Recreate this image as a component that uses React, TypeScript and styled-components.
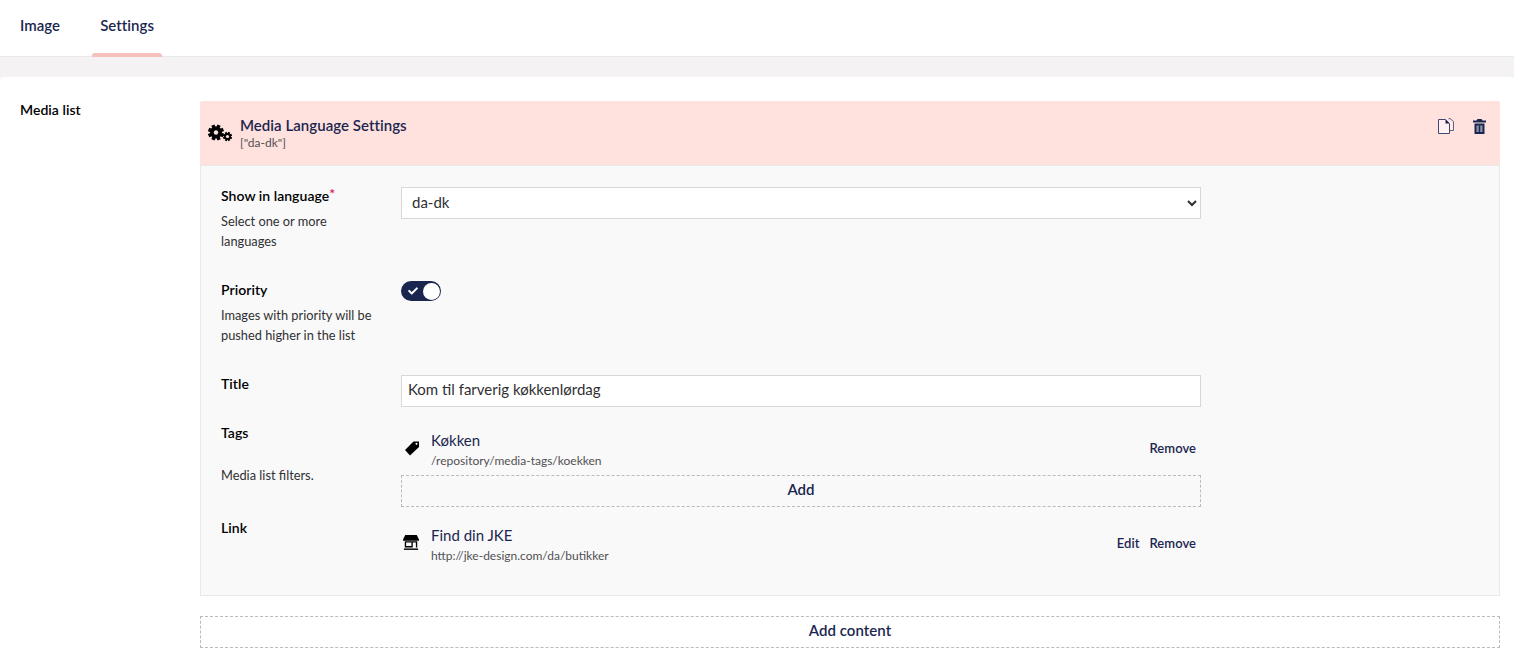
import React from "react";
import styled, { createGlobalStyle } from "styled-components";
import { FaCheck } from "react-icons/fa";

const GlobalStyle = createGlobalStyle`
  html, body { margin: 0; padding: 0; background: #f4f2f3; }
  body { font-family: Lato, "Open Sans", sans-serif; color: #1b264f; overflow: hidden; }
  * { box-sizing: border-box; }
`;

const Page = styled.div`
  width: 1514px;
  height: 653px;
  overflow: hidden;
  display: flex;
  flex-direction: column;
`;

const TabBar = styled.div`
  height: 57px;
  flex: none;
  background: #fff;
  border-bottom: 1px solid #e9e9eb;
  display: flex;
  gap: 24px;
  padding-left: 12px;
`;

const Tab = styled.div<{ $active?: boolean }>`
  position: relative;
  height: 56px;
  padding: 0 8px;
  font-size: 15px;
  font-weight: 600;
  letter-spacing: 0.04px;
  line-height: 51px;
  color: #1b264f;

  ${(p) =>
    p.$active &&
    `&::after {
      content: "";
      position: absolute;
      left: 0;
      right: 0;
      bottom: -1px;
      height: 4px;
      background: #f5c1bc;
      border-radius: 3px 3px 0 0;
    }`}
`;

const Panel = styled.div`
  margin-top: 20px;
  flex: 1;
  background: #fff;
  border-radius: 3px 3px 0 0;
  padding: 24px 14px 0 20px;
  display: flex;
`;

const PropertyLabel = styled.div`
  width: 180px;
  flex: none;
  font-size: 14px;
  font-weight: 600;
  letter-spacing: 0.04px;
  line-height: 18px;
  color: #000;
`;

const Editor = styled.div`
  width: 1300px;
  flex: none;
`;

const Block = styled.div`
  height: 495px;
  border-radius: 3px 3px 0 0;
  background: #f9f9f9;
  border: 1px solid #e9e9eb;
  border-top: none;
`;

const BlockHeader = styled.div`
  height: 65px;
  margin: 0 -1px;
  background: #ffe1dd;
  border-bottom: 1px solid #e9e9eb;
  border-radius: 3px 3px 0 0;
  display: flex;
  align-items: center;
  padding: 0 14px 0 8px;
`;

const BlockIcon = styled.span`
  width: 24px;
  height: 20px;
  margin-right: 8px;
  margin-top: 1px;
  display: flex;
  color: #000;
`;

const BlockTitle = styled.div`
  flex: 1;
  margin-top: 1px;
`;

const BlockName = styled.div`
  font-size: 15px;
  font-weight: 600;
  letter-spacing: 0.04px;
  line-height: 18px;
  margin-bottom: 1px;
  color: #1b264f;
`;

const BlockMeta = styled.div`
  font-size: 12px;
  line-height: 16px;
  color: #515054;
`;

const HeaderActions = styled.div`
  display: flex;
  gap: 19px;
  align-items: center;
  margin-top: -14px;
`;

const BlockBody = styled.div`
  padding: 21px 20px 0;
`;

const Row = styled.div<{ $height: number }>`
  display: flex;
  height: ${(p) => p.$height}px;
`;

const Meta = styled.div`
  width: 180px;
  flex: none;
`;

const FieldLabel = styled.div`
  font-size: 14px;
  font-weight: 600;
  letter-spacing: 0.04px;
  line-height: 18px;
  color: #000;

  sup {
    color: #d42054;
    font-size: 14px;
    line-height: 0;
    vertical-align: 2px;
  }
`;

const FieldHelp = styled.div<{ $top?: number }>`
  margin-top: ${(p) => p.$top ?? 6}px;
  font-size: 12.8px;
  line-height: 20px;
  color: #303033;
  width: 160px;
`;

const Control = styled.div`
  width: 800px;
  flex: none;
`;

const Select = styled.select`
  display: block;
  width: 800px;
  height: 32px;
  padding: 0 6px 2px;
  border: 1px solid #d8d7d9;
  background: #fff;
  font-family: inherit;
  font-size: 15px;
  color: #303033;
  border-radius: 0;
  outline: none;
`;

const Toggle = styled.div`
  width: 40px;
  height: 20px;
  border-radius: 10px;
  background: #1b264f;
  display: flex;
  align-items: center;
  padding: 0 1px 0 7px;
  justify-content: space-between;
  color: #fff;
  font-size: 10px;
`;

const Knob = styled.span`
  width: 17px;
  height: 17px;
  border-radius: 50%;
  background: #fff;
`;

const TextInput = styled.input`
  display: block;
  width: 800px;
  height: 32px;
  padding: 0 6px 4px;
  border: 1px solid #d8d7d9;
  background: #fff;
  font-family: inherit;
  font-size: 15px;
  color: #303033;
  outline: none;
`;

const Picked = styled.div`
  height: 51px;
  padding-top: 2px;
  display: flex;
  align-items: center;
`;

const PickedIcon = styled.span`
  width: 30px;
  flex: none;
  display: flex;
  margin-bottom: 6px;
`;

const PickedText = styled.div`
  flex: 1;
`;

const PickedName = styled.div`
  font-size: 15px;
  line-height: 20px;
  margin: -1px 0 1px;
  color: #1b264f;
`;

const PickedPath = styled.div`
  font-size: 12px;
  line-height: 20px;
  color: #515054;
`;

const Action = styled.span`
  font-size: 13px;
  font-weight: 600;
  letter-spacing: 0.04px;
  line-height: 16px;
  color: #1b264f;
  margin: 0 5px 6px 10px;
  & + & { margin-left: 5px; }
`;

const AddButton = styled.div<{ $top: number }>`
  height: 32px;
  margin-top: ${(p) => p.$top}px;
  padding-bottom: 4px;
  border: 1px dashed #bbbabf;
  display: flex;
  align-items: center;
  justify-content: center;
  font-size: 15px;
  font-weight: 600;
  letter-spacing: 0.04px;
  color: #1b264f;
`;

// teeth around a gear, drawn as short rects turned round its centre
const Gear = ({ cx, cy, r, hole, teeth }: { cx: number; cy: number; r: number; hole: number; teeth: number }) => (
  <g fill="#000">
    {Array.from({ length: teeth }).map((_, i) => (
      <rect
        key={i}
        x={cx - r * 0.22}
        y={cy - r}
        width={r * 0.44}
        height={r * 2}
        transform={`rotate(${(i * 180) / teeth + 22} ${cx} ${cy})`}
      />
    ))}
    <circle cx={cx} cy={cy} r={r * 0.74} />
    <circle cx={cx} cy={cy} r={hole} fill="#ffe1dd" />
  </g>
);

const CogsIcon = () => (
  <svg width="24" height="20" viewBox="0 0 24 20">
    <Gear cx={8} cy={8.5} r={8} hole={2.2} teeth={4} />
    <Gear cx={19.5} cy={12.5} r={4.6} hole={1.6} teeth={4} />
  </svg>
);

const TagIcon = () => (
  <svg width="16" height="16" viewBox="0 0 16 16" style={{ marginLeft: 3 }}>
    <path
      fillRule="evenodd"
      d="M9.5 1.5 H15 V7 L6 15.5 L1 10 Z M12.5 2.8 a1 1 0 1 0 .01 0 Z"
      fill="#000"
    />
  </svg>
);

const StoreIcon = () => (
  <svg width="16" height="17" viewBox="0 0 18 17" style={{ marginLeft: 2 }}>
    <path d="M2.5 0 H15.5 L18 5 V6.5 H0 V5 Z" fill="#000" />
    <path fillRule="evenodd" d="M2 7 H16 V14 H2 Z M3.5 8.5 V12.5 H9.5 V8.5 Z M11 8.5 V14 H14.5 V8.5 Z" fill="#000" />
    <rect x="1" y="15.2" width="16" height="1.6" fill="#000" />
  </svg>
);

const CopyIcon = () => (
  <svg width="16" height="16" viewBox="0 0 16 16" fill="none">
    <path d="M10.5 .8 L12 .5 L15.5 3.5 V12.5 H12" stroke="#5b6284" fill="#fff" fillOpacity="0.3" />
    <path d="M.5 1.5 H7.5 L11.5 5.5 V15.5 H.5 Z" fill="#fff" fillOpacity="0.55" stroke="#3f4870" />
    <path d="M7.5 1.5 V5.5 H11.5 Z" fill="#1b264f" />
  </svg>
);

const TrashIcon = () => (
  <svg width="13" height="15" viewBox="0 0 13 15">
    <path d="M4.5 0 H8.5 L9.5 1.5 H13 V3.5 H0 V1.5 H3.5 Z" fill="#1b264f" />
    <path d="M1.5 4.5 H11.5 V15 H1.5 Z" fill="#1b264f" />
    <path d="M3.5 6.5 H9.5 V13 H3.5 Z" fill="#8d90a6" />
    <rect x="5.8" y="6.5" width="1.4" height="6.5" fill="#1b264f" />
  </svg>
);

export default function App() {
  return (
    <Page>
      <GlobalStyle />
      <TabBar>
        <Tab>Image</Tab>
        <Tab $active>Settings</Tab>
      </TabBar>
      <Panel>
        <PropertyLabel>Media list</PropertyLabel>
        <Editor>
          <Block>
            <BlockHeader>
              <BlockIcon>
                <CogsIcon />
              </BlockIcon>
              <BlockTitle>
                <BlockName>Media Language Settings</BlockName>
                <BlockMeta>["da-dk"]</BlockMeta>
              </BlockTitle>
              <HeaderActions>
                <CopyIcon />
                <TrashIcon />
              </HeaderActions>
            </BlockHeader>
            <BlockBody>
              <Row $height={94}>
                <Meta>
                  <FieldLabel>
                    Show in language<sup>*</sup>
                  </FieldLabel>
                  <FieldHelp>Select one or more languages</FieldHelp>
                </Meta>
                <Control>
                  <Select defaultValue="da-dk">
                    <option>da-dk</option>
                  </Select>
                </Control>
              </Row>
              <Row $height={94}>
                <Meta>
                  <FieldLabel>Priority</FieldLabel>
                  <FieldHelp>Images with priority will be pushed higher in the list</FieldHelp>
                </Meta>
                <Control>
                  <Toggle>
                    <FaCheck />
                    <Knob />
                  </Toggle>
                </Control>
              </Row>
              <Row $height={49}>
                <Meta>
                  <FieldLabel>Title</FieldLabel>
                </Meta>
                <Control>
                  <TextInput defaultValue="Kom til farverig køkkenlørdag" />
                </Control>
              </Row>
              <Row $height={95}>
                <Meta>
                  <FieldLabel>Tags</FieldLabel>
                  <FieldHelp $top={23}>Media list filters.</FieldHelp>
                </Meta>
                <Control>
                  <Picked>
                    <PickedIcon>
                      <TagIcon />
                    </PickedIcon>
                    <PickedText>
                      <PickedName>Køkken</PickedName>
                      <PickedPath>/repository/media-tags/koekken</PickedPath>
                    </PickedText>
                    <Action>Remove</Action>
                  </Picked>
                  <AddButton $top={0}>Add</AddButton>
                </Control>
              </Row>
              <Row $height={60}>
                <Meta>
                  <FieldLabel>Link</FieldLabel>
                </Meta>
                <Control>
                  <Picked>
                    <PickedIcon>
                      <StoreIcon />
                    </PickedIcon>
                    <PickedText>
                      <PickedName>Find din JKE</PickedName>
                      <PickedPath>http://jke-design.com/da/butikker</PickedPath>
                    </PickedText>
                    <Action>Edit</Action>
                    <Action>Remove</Action>
                  </Picked>
                </Control>
              </Row>
            </BlockBody>
          </Block>
          <AddButton $top={20}>Add content</AddButton>
        </Editor>
      </Panel>
    </Page>
  );
}
